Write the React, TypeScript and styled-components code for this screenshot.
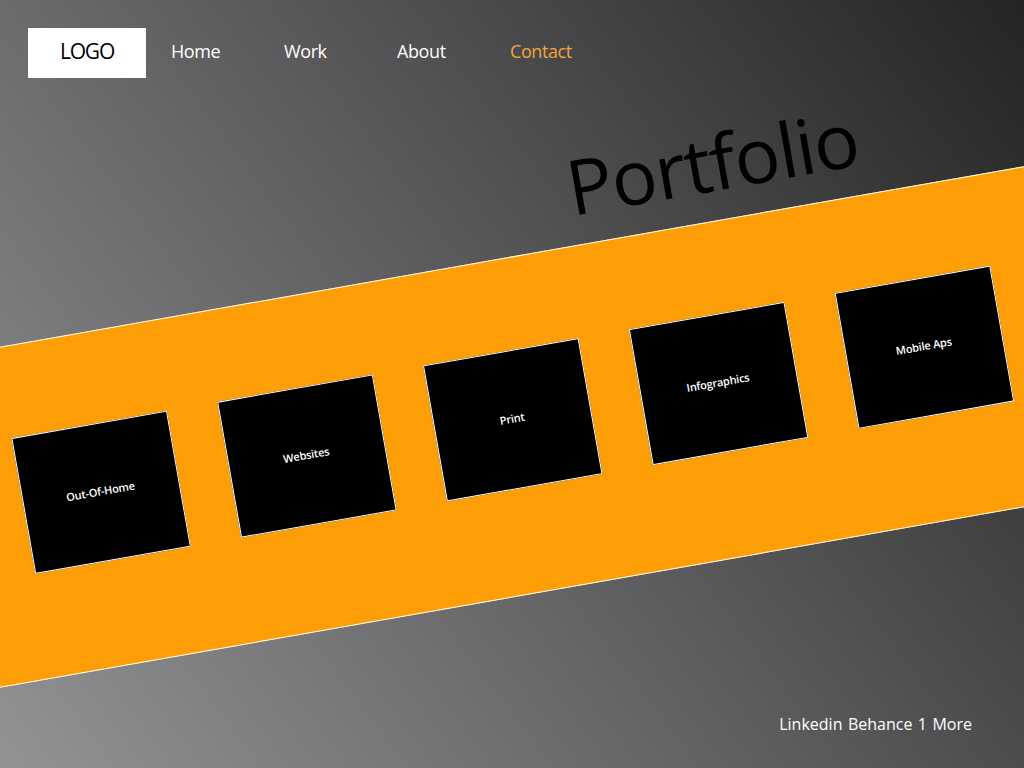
import React from "react";
import styled, { createGlobalStyle } from "styled-components";

const GlobalStyle = createGlobalStyle`
  html, body {
    margin: 0;
    padding: 0;
  }
  body {
    font-family: "Open Sans", "Noto Sans", sans-serif;
  }
  * { box-sizing: border-box; }
`;

const Page = styled.div`
  width: 100%;
  height: 768px;
  overflow: hidden;
  display: flex;
  flex-direction: column;
  background: linear-gradient(53deg, #939395 0%, #252425 100%);
  font-family: "Open Sans", "Noto Sans", sans-serif;
`;

const Nav = styled.nav`
  display: flex;
  align-items: center;
  padding: 28px 0 0 28px;
  height: 78px;
  flex-shrink: 0;
`;

const Logo = styled.div`
  width: 118px;
  height: 50px;
  background: #ffffff;
  color: #000000;
  display: flex;
  align-items: center;
  justify-content: center;
  padding-bottom: 4px;
  font-size: 21px;
  letter-spacing: -1.2px;
  margin-right: 25px;
`;

const NavLink = styled.a<{ $active?: boolean }>`
  width: 113px;
  font-size: 18px;
  letter-spacing: -0.4px;
  color: ${(p) => (p.$active ? "#f2a53a" : "#ffffff")};
  text-decoration: none;
  line-height: 46px;
  padding-bottom: 4px;
`;

const Heading = styled.h1`
  align-self: flex-start;
  margin: 46px 0 0 565px;
  font-size: 76px;
  font-weight: 400;
  letter-spacing: -1.2px;
  line-height: 1;
  color: #000000;
  transform: rotate(-10deg);
  flex-shrink: 0;
`;

const Band = styled.section`
  align-self: center;
  flex-shrink: 0;
  width: 1400px;
  height: 336px;
  margin-top: 59px;
  background: #fe9e06;
  border-top: 1.5px solid #ffffff;
  border-bottom: 1.5px solid #ffffff;
  transform: rotate(-10deg);
  display: flex;
  align-items: center;
  justify-content: center;
  gap: 51px;
  padding: 0 0 15px 3px;
`;

const Card = styled.div`
  width: 158px;
  height: 138px;
  flex-shrink: 0;
  background: #000000;
  border: 1px solid #ffffff;
  color: #ffffff;
  display: flex;
  align-items: center;
  justify-content: center;
  padding-bottom: 2px;
  font-size: 11px;
  font-weight: 600;
  letter-spacing: -0.2px;
`;

const Footer = styled.footer`
  margin-top: auto;
  display: flex;
  justify-content: flex-end;
  padding: 0 52px 33px 0;
  color: #ffffff;
  font-size: 16px;
  word-spacing: 1.3px;
  line-height: 22px;
`;

const categories = ["Out-Of-Home", "Websites", "Print", "Infographics", "Mobile Aps"];

export default function App() {
  return (
    <>
      <GlobalStyle />
      <Page>
        <Nav>
          <Logo>LOGO</Logo>
          <NavLink href="#">Home</NavLink>
          <NavLink href="#">Work</NavLink>
          <NavLink href="#">About</NavLink>
          <NavLink href="#" $active>
            Contact
          </NavLink>
        </Nav>
        <Heading>Portfolio</Heading>
        <Band>
          {categories.map((c) => (
            <Card key={c}>{c}</Card>
          ))}
        </Band>
        <Footer>Linkedin Behance 1 More</Footer>
      </Page>
    </>
  );
}
